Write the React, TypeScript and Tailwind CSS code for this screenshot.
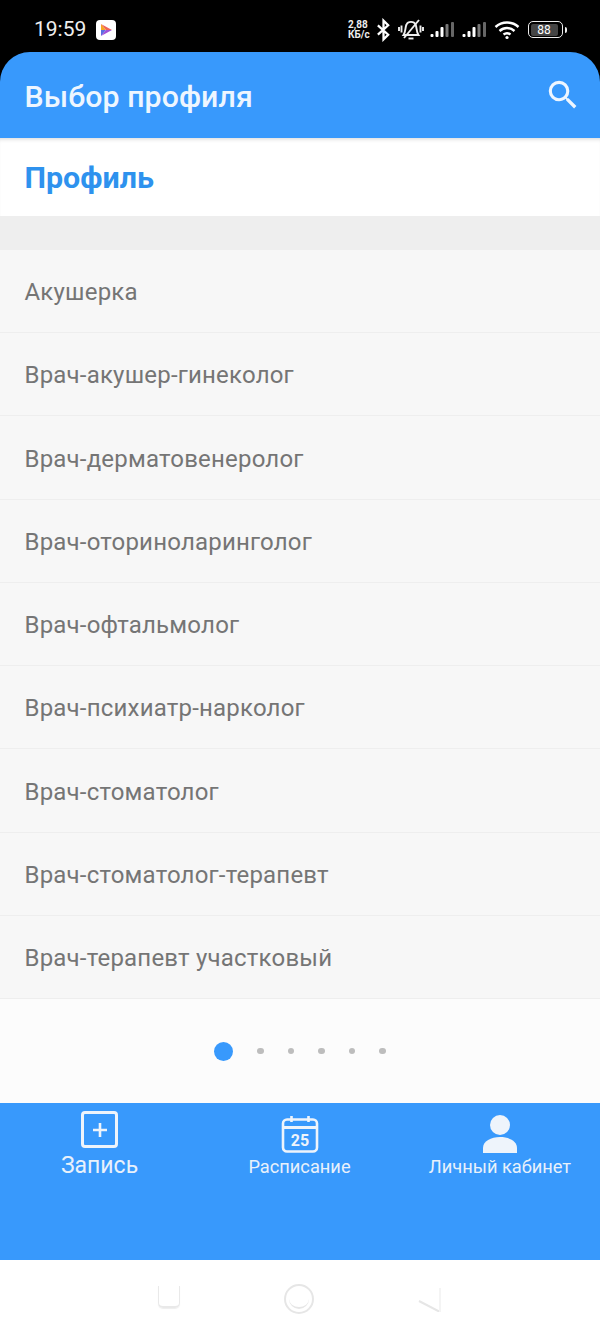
import { MdSearch } from "react-icons/md";

const profiles = [
  "Акушерка",
  "Врач-акушер-гинеколог",
  "Врач-дерматовенеролог",
  "Врач-оториноларинголог",
  "Врач-офтальмолог",
  "Врач-психиатр-нарколог",
  "Врач-стоматолог",
  "Врач-стоматолог-терапевт",
  "Врач-терапевт участковый",
];

const SignalIcon = () => (
  <svg width="25" height="18" viewBox="0 0 25 18">
    <rect x="0.5" y="13" width="3" height="3" rx="1" fill="#fff" />
    <rect x="5.5" y="10" width="3" height="6" rx="1" fill="#fff" />
    <rect x="10.5" y="6" width="3" height="10" rx="1" fill="#fff" />
    <rect x="15.5" y="3" width="3" height="13" rx="1" fill="#777" />
    <rect x="21" y="1" width="3" height="15" rx="1" fill="#666" />
  </svg>
);

const StatusBar = () => (
  <div className="flex h-[52px] items-center justify-between bg-black pl-[34px] pr-[33px] pt-[8px] text-white">
    <div className="flex items-center gap-[10px]">
      <span className="text-[21px] leading-none text-[#eeeeee]">19:59</span>
      <div className="flex size-[20px] items-center justify-center rounded-[4px] bg-white">
        <svg width="14" height="14" viewBox="0 0 14 14">
          <path d="M2 1 L7 7 L2 7 Z" fill="#f5a623" />
          <path d="M2 7 L7 7 L2 13 Z" fill="#5b6ee1" />
          <path d="M2 1 L13 7 L7 7 Z" fill="#f0635a" />
          <path d="M2 13 L13 7 L7 7 Z" fill="#a050d8" />
        </svg>
      </div>
    </div>
    <div className="flex items-center">
      <div className="w-[24px] text-[10px] font-bold leading-[10px] text-[#eeeeee]">
        <div>2,88</div>
        <div>КБ/с</div>
      </div>
      <svg width="15" height="24" viewBox="0 0 16 24" fill="none" stroke="#fff" strokeWidth="2.4" className="ml-[4px]">
        <path d="M2 7 L13 17 L8 22 V2 L13 7 L2 17" />
      </svg>
      <svg width="26" height="24" viewBox="0 0 26 24" fill="none" stroke="#eee" strokeWidth="1.9" className="ml-[7px]">
        <path d="M5.5 17 C8 13.5 7 9.5 8.5 6.5 C10 3 16 3 17.5 6.5 C19 9.5 18 13.5 20.5 17 Z" />
        <path d="M10.5 20.5 H15.5" />
        <path d="M6 20 L21 2" />
        <path d="M1 9 V13 M3.5 7.5 V14.5 M22.5 7.5 V14.5 M25 9 V13" />
      </svg>
      <div className="ml-[6px]"><SignalIcon /></div>
      <div className="ml-[7px]"><SignalIcon /></div>
      <svg width="26" height="20" viewBox="0 0 26 20" fill="none" stroke="#fff" strokeWidth="2.4" className="ml-[7px]">
        <path d="M1.5 7 C8 1 18 1 24.5 7" />
        <path d="M5.5 11 C10 7 16 7 20.5 11" />
        <path d="M9.5 14.5 C11.5 13 14.5 13 16.5 14.5" />
        <circle cx="13" cy="17.5" r="1.6" fill="#fff" stroke="none" />
      </svg>
      <div className="ml-[8px] flex items-center gap-[2px]">
        <div className="flex h-[17px] w-[35px] items-center rounded-[5px] border-[1.5px] border-[#eeeeee] p-[1.5px]">
          <div className="flex h-full w-[27px] items-center justify-center rounded-[2px] bg-[#444444] text-[12px] leading-none text-white">88</div>
        </div>
        <div className="h-[6px] w-[2px] rounded-r-[2px] bg-[#eeeeee]" />
      </div>
    </div>
  </div>
);

const TabBar = () => (
  <div className="flex h-[157px] items-start bg-[#3899fc] text-[#e8f1fb]">
    <div className="flex w-[199px] flex-col items-center pt-[8px]">
      <div className="flex size-[37px] items-center justify-center rounded-[4px] border-[3px] border-[#eef4fb]">
        <svg width="18" height="18" viewBox="0 0 18 18" fill="none" stroke="#eef4fb" strokeWidth="2.6">
          <path d="M9 2 V16 M2 9 H16" />
        </svg>
      </div>
      <span className="mt-[5px] text-[23px] leading-[26px]">Запись</span>
    </div>
    <div className="flex w-[201px] flex-col items-center pt-[12px]">
      <svg width="38" height="38" viewBox="0 0 38 38" fill="none" stroke="#eef4fb" strokeWidth="2.6">
        <rect x="2" y="4.5" width="34" height="32" rx="4" />
        <path d="M2 12.5 H36" strokeWidth="3" />
        <path d="M10.5 1 V7 M27.5 1 V7" strokeWidth="2.6" />
        <text x="19" y="31" textAnchor="middle" fill="#eef4fb" stroke="none" fontSize="16" fontWeight="700" fontFamily="Roboto, sans-serif">25</text>
      </svg>
      <span className="mt-[-1px] text-[18.25px] leading-[30px]">Расписание</span>
    </div>
    <div className="flex w-[200px] flex-col items-center pt-[12px]">
      <svg width="36" height="38" viewBox="0 0 36 38" fill="#eef4fb">
        <circle cx="18" cy="10" r="10" />
        <path d="M1 38 V33 C1 26 9 22 18 22 C27 22 35 26 35 33 V38 Z" />
      </svg>
      <span className="mt-[-1px] text-[18.25px] leading-[30px]">Личный кабинет</span>
    </div>
  </div>
);

const NavBar = () => (
  <div className="flex h-[72px] items-start bg-white pl-[158px] pt-[26px]">
    <div className="h-[22px] w-[22px] rounded-b-[5px] border-b-2 border-l border-r border-[#e9e9e9] shadow-[0_1px_1px_#eeeeee]" />
    <div className="ml-[104px] mt-[-2px] flex size-[30px] items-end justify-center rounded-full border-2 border-[#e6e6e6] pb-[3px]">
      <div className="size-[20px] rounded-full border-b-2 border-[#e6e6e6]" />
    </div>
    <svg width="24" height="26" viewBox="0 0 24 26" fill="none" stroke="#e6e6e6" strokeWidth="2" className="ml-[104px]">
      <path d="M1 15 L22 26" />
      <path d="M22 2 V26" stroke="#f4f4f4" />
    </svg>
  </div>
);

export default function App() {
  return (
    <div className="flex h-[1332px] w-[600px] flex-col overflow-hidden bg-black font-['Roboto',sans-serif]">
      <StatusBar />
      <div className="flex h-[86px] items-center justify-between rounded-t-[30px] bg-[#3899fc] pl-[24.5px] pr-[18px]">
        <h1 className="mt-[4px] text-[30.25px] font-medium leading-none tracking-[0.1px] text-[#eef6ff]">Выбор профиля</h1>
        <MdSearch size={38} color="#eef6ff" />
      </div>
      <div className="flex h-[78px] items-center bg-white pl-[24.5px] shadow-[inset_0_4px_4px_-3px_#d6d6d6]">
        <h2 className="mt-[3px] text-[30.4px] font-bold leading-none text-[#2e92ee]">Профиль</h2>
      </div>
      <div className="h-[34px] bg-[#eeeeee]" />
      <div className="flex flex-col">
        {profiles.map((name) => (
          <div
            key={name}
            className="flex h-[83.25px] items-center border-b border-[#eeeeee] bg-[#f7f7f7] pl-[24.5px] pt-[2px] text-[24px] tracking-[0.2px] text-[#757575]"
          >
            {name}
          </div>
        ))}
      </div>
      <div className="flex h-[104px] items-center bg-[#fcfcfc] pl-[214px]">
        <div className="size-[19px] rounded-full bg-[#3899fc]" />
        <div className="ml-[24px] flex items-center gap-[24px]">
          {[0, 1, 2, 3, 4].map((i) => (
            <div key={i} className="size-[6.5px] rounded-full bg-[#bdbdbd]" />
          ))}
        </div>
      </div>
      <TabBar />
      <NavBar />
    </div>
  );
}
